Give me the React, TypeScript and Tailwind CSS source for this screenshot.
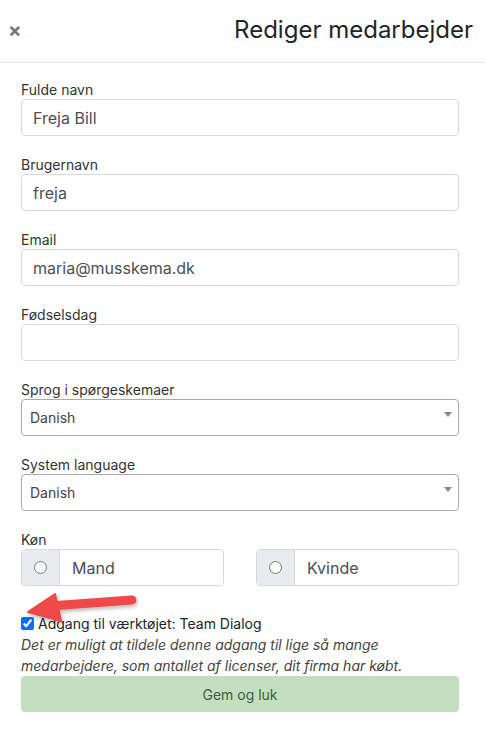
import React from 'react';

const Field: React.FC<{ label: string; value?: string }> = ({ label, value }) => (
  <div className="mb-[19px]">
    <div className="text-[14px] leading-[19px] text-[#333]">{label}</div>
    <div className="h-[37px] rounded-[4px] border border-[#d9d9d9] bg-white pl-[11px] flex items-center text-[16px] text-[#495057]">
      {value}
    </div>
  </div>
);

const SelectField: React.FC<{ label: string; value: string }> = ({ label, value }) => (
  <div className="mb-[19px]">
    <div className="text-[14px] leading-[19px] text-[#333]">{label}</div>
    <div className="relative h-[37px] rounded-[4px] border border-[#aaaaaa] bg-white pl-[8px] flex items-center text-[14px] text-[#444]">
      {value}
      <span className="absolute right-[6px] top-[12px] w-0 h-0 border-l-[4px] border-r-[4px] border-t-[5px] border-l-transparent border-r-transparent border-t-[#888]" />
    </div>
  </div>
);

const RadioBox: React.FC<{ label: string }> = ({ label }) => (
  <div className="flex h-[37px] w-[203px] rounded-[4px] border border-[#d9d9d9] overflow-hidden">
    <div className="w-[38px] bg-[#e9ecef] border-r border-[#d9d9d9] flex items-center justify-center">
      <span className="w-[13px] h-[13px] rounded-full border border-[#767676] bg-white" />
    </div>
    <div className="flex items-center pl-[12px] text-[16px] text-[#495057]">{label}</div>
  </div>
);

export default function App() {
  return (
    <div className="relative w-[485px] h-[732px] bg-white font-['Inter',sans-serif]">
      <div className="h-[63px] border-b border-[#e5e5e5] flex items-center justify-between pl-[8px] pr-[12px] pb-[2px]">
        <span className="text-[20px] font-bold text-[#777] leading-none">×</span>
        <h1 className="text-[24px] text-[#212529]">Rediger medarbejder</h1>
      </div>

      <div className="px-[21px] pt-[17px]">
        <div className="w-[438px]">
          <Field label="Fulde navn" value="Freja Bill" />
          <Field label="Brugernavn" value="freja" />
          <Field label="Email" value="maria@musskema.dk" />
          <Field label="Fødselsdag" />
          <SelectField label="Sprog i spørgeskemaer" value="Danish" />
          <SelectField label="System language" value="Danish" />

          <div className="text-[14px] leading-[19px] text-[#333]">Køn</div>
          <div className="flex justify-between">
            <RadioBox label="Mand" />
            <RadioBox label="Kvinde" />
          </div>

          <div className="mt-[27px] flex items-center h-[21px] text-[14px] text-[#212529]">
            <input type="checkbox" defaultChecked className="w-[13px] h-[13px] mr-[4px] accent-[#0b6cff]" />
            <span>Adgang til værktøjet: Team Dialog</span>
          </div>
          <p className="text-[14px] leading-[21px] italic text-[#444]">
            Det er muligt at tildele denne adgang til lige så mange medarbejdere, som antallet af licenser, dit firma har købt.
          </p>
          <button className="w-full h-[36px] rounded-[4px] bg-[#c3dfc0] text-[14px] text-[#3f5b4b]">Gem og luk</button>
        </div>
      </div>

      <svg className="absolute left-0 top-[580px]" width="150" height="50" viewBox="0 580 150 50">
        <defs>
          <filter id="sh" x="-20%" y="-40%" width="140%" height="180%">
            <feDropShadow dx="1" dy="2" stdDeviation="2" floodColor="#000" floodOpacity="0.3" />
          </filter>
        </defs>
        <g filter="url(#sh)" fill="#ef4848" stroke="#ef4848">
          <line x1="50" y1="606" x2="132" y2="600" strokeWidth="9" strokeLinecap="round" />
          <polygon points="28,612 55,594 61,621" strokeWidth="2" strokeLinejoin="round" />
        </g>
      </svg>
    </div>
  );
}
